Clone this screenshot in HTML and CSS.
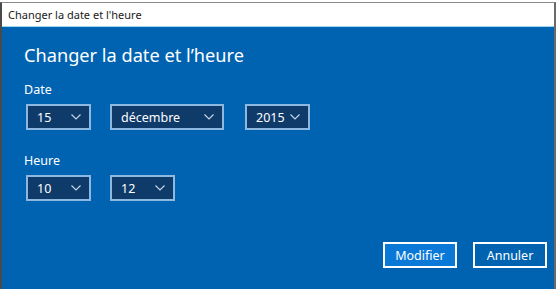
FILE: index.html
```html
<!DOCTYPE html>
<html lang="fr">
<head>
  <meta charset="UTF-8">
  <title>Changer la date et l'heure</title>
  <link rel="stylesheet" href="styles.css">
</head>
<body>
  <div class="window">
    <div class="titlebar">Changer la date et l'heure</div>

    <div class="panel">
      <h1>Changer la date et l’heure</h1>

      <div class="label">Date</div>
      <div class="row">
        <div class="select w-day"><span>15</span><svg class="chev" viewBox="0 0 10 6"><path d="M0.5 0.5 L5 5 L9.5 0.5"/></svg></div>
        <div class="select w-month"><span>décembre</span><svg class="chev" viewBox="0 0 10 6"><path d="M0.5 0.5 L5 5 L9.5 0.5"/></svg></div>
        <div class="select w-year"><span>2015</span><svg class="chev" viewBox="0 0 10 6"><path d="M0.5 0.5 L5 5 L9.5 0.5"/></svg></div>
      </div>

      <div class="label time">Heure</div>
      <div class="row">
        <div class="select w-day"><span>10</span><svg class="chev" viewBox="0 0 10 6"><path d="M0.5 0.5 L5 5 L9.5 0.5"/></svg></div>
        <div class="select w-day"><span>12</span><svg class="chev" viewBox="0 0 10 6"><path d="M0.5 0.5 L5 5 L9.5 0.5"/></svg></div>
      </div>

      <div class="actions">
        <button class="btn primary">Modifier</button>
        <button class="btn">Annuler</button>
      </div>
    </div>
  </div>
</body>
</html>
```

FILE: styles.css
```css
* {
  box-sizing: border-box;
  font-family: 'Noto Sans', 'Open Sans', sans-serif;
}

body {
  margin: 0;
  background: #fff;
  height: 289px;
  overflow: hidden;
}

.window {
  margin-top: 2px;
  width: 556px;
  height: 287px;
  border-left: 2px solid #4a4a4a;
  border-top: 1px solid #8a8a8a;
  border-right: 2px solid #6a6a6a;
  display: flex;
  flex-direction: column;
}

.titlebar {
  height: 24px;
  line-height: 23px;
  padding-left: 6px;
  font-size: 11px;
  color: #1a1a1a;
  background: #fff;
  border-bottom: 1px solid #9fd6f2;
}

.panel {
  flex: 1;
  background: #0063b1;
  padding: 14px 22px 0 22px;
  color: #fff;
}

h1 {
  margin: 0;
  font-size: 18.2px;
  font-weight: 400;
  line-height: 28px;
}

.label {
  margin-top: 12px;
  font-size: 12.5px;
  line-height: 17px;
}

.label.time {
  margin-top: 22px;
}

.row {
  display: flex;
  gap: 19px;
  margin-top: 6px;
  margin-left: 2px;
}

.select {
  height: 26px;
  border: 2px solid #8db8e0;
  background: #0f3b6b;
  display: flex;
  align-items: center;
  justify-content: space-between;
  padding: 0 8px 0 9px;
  font-size: 12.5px;
}

.w-day { width: 65px; }
.w-month { width: 114px; }
.w-year { width: 65px; margin-left: 2px; }

.chev {
  width: 10px;
  height: 6px;
  fill: none;
  stroke: #c8d8ea;
  stroke-width: 1.1;
}

.actions {
  display: flex;
  justify-content: flex-end;
  gap: 16px;
  margin-top: 41px;
  margin-right: -15px;
}

.btn {
  width: 74px;
  height: 26px;
  border: 2px solid #fff;
  background: #0063b1;
  color: #fff;
  font-size: 12.5px;
  padding: 0;
}

.btn.primary {
  background: #0a78d6;
}
```
